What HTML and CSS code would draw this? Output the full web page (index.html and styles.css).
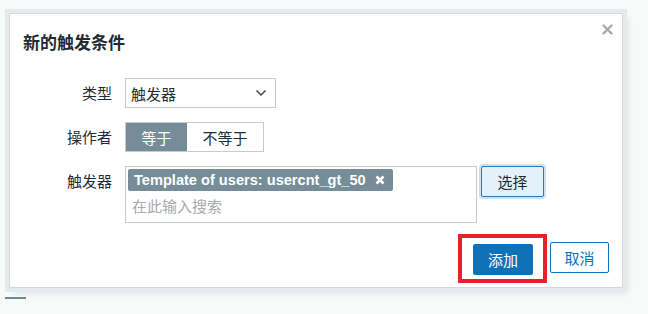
FILE: index.html
```html
<!DOCTYPE html>
<html lang="zh-CN">
<head>
<meta charset="UTF-8">
<title>新的触发条件</title>
<link rel="stylesheet" href="styles.css">
</head>
<body>
<div class="overlay">
<div class="dialog">
<div class="dialog-head">
<h4>新的触发条件</h4>
<button class="close" title="关闭">
<svg width="11" height="11" viewBox="0 0 11 11"><path d="M1.5 1.5 L9.5 9.5 M9.5 1.5 L1.5 9.5" stroke="#a3a9ae" stroke-width="2.4" stroke-linecap="round"/></svg>
</button>
</div>
<div class="form">
<label>类型</label>
<div class="field">
<div class="select">
<span>触发器</span>
<svg width="12" height="8" viewBox="0 0 12 8"><path d="M1.5 1.5 L6 6 L10.5 1.5" fill="none" stroke="#3a464d" stroke-width="1.5"/></svg>
</div>
</div>
<label>操作者</label>
<div class="field">
<div class="segment">
<span class="seg active">等于</span>
<span class="seg">不等于</span>
</div>
</div>
<label>触发器</label>
<div class="field multi-row">
<div class="multiselect">
<span class="tag">Template of users: usercnt_gt_50
<svg width="10" height="10" viewBox="0 0 10 10"><path d="M1.5 1.5 L8.5 8.5 M8.5 1.5 L1.5 8.5" stroke="#fff" stroke-width="2.6"/></svg>
</span>
<span class="placeholder">在此输入搜索</span>
</div>
<button class="btn-alt">选择</button>
</div>
</div>
<div class="dialog-foot">
<div class="mark">
<button class="btn-primary">添加</button>
</div>
<button class="btn-outline">取消</button>
</div>
</div>
</div>
<div class="page-tab"></div>
</body>
</html>
```

FILE: styles.css
```css
body {
margin: 0;
padding: 13px 0 0 9px;
background-color: #f8f9f9;
font-family: "Liberation Sans", "Noto Sans CJK SC", sans-serif;
font-size: 15px;
color: #1f2c33;
width: 648px;
height: 314px;
box-sizing: border-box;
overflow: hidden;
}
.dialog {
width: 614px;
height: 275px;
box-sizing: border-box;
background-color: #fff;
border: 1px solid #d3d8dc;
box-shadow: 0 0 0 4px #e7eaed, 5px 5px 6px rgba(0, 0, 0, 0.1);
display: flex;
flex-direction: column;
}
.dialog-head {
display: flex;
justify-content: space-between;
align-items: flex-start;
padding: 18px 9px 0 13px;
}
.dialog-head h4 {
margin: 0;
font-size: 17px;
line-height: 20px;
font-weight: bold;
font-family: "Noto Sans CJK SC", sans-serif;
color: #1f2c33;
}
.close {
border: none;
background: none;
padding: 0;
margin-top: -8px;
width: 11px;
height: 11px;
}
.close svg {
display: block;
}
.form {
display: grid;
grid-template-columns: 102px 1fr;
column-gap: 13px;
row-gap: 14px;
margin-top: 26px;
}
.form label {
text-align: right;
line-height: 30px;
font-family: "Noto Sans CJK SC", sans-serif;
}
.field {
display: flex;
gap: 4px;
align-items: flex-start;
}
.select {
width: 151px;
height: 30px;
box-sizing: border-box;
border: 1px solid #c5cbcf;
display: flex;
align-items: center;
justify-content: space-between;
padding: 0 8px 0 5px;
font-family: "Noto Sans CJK SC", sans-serif;
}
.segment {
display: flex;
height: 30px;
border: 1px solid #c5cbcf;
box-sizing: border-box;
font-family: "Noto Sans CJK SC", sans-serif;
}
.seg {
display: flex;
align-items: center;
justify-content: center;
width: 61px;
}
.seg + .seg {
width: 76px;
}
.seg.active {
background-color: #768d99;
color: #fff;
}
.multiselect {
width: 352px;
height: 57px;
box-sizing: border-box;
border: 1px solid #c5cbcf;
padding: 2px;
display: flex;
flex-direction: column;
align-items: flex-start;
}
.tag {
display: flex;
align-items: center;
gap: 9px;
background-color: #768d99;
color: #fff;
font-weight: bold;
font-size: 14.6px;
height: 22px;
padding: 0 8px 0 6px;
border-radius: 2px;
white-space: nowrap;
}
.placeholder {
color: #a4aaae;
padding-left: 4px;
margin-top: 4px;
line-height: 22px;
font-family: "Noto Sans CJK SC", sans-serif;
}
button {
font-family: "Noto Sans CJK SC", sans-serif;
font-size: 15px;
cursor: pointer;
}
.btn-alt {
width: 63px;
height: 31px;
background-color: #e6f0fa;
color: #1f2c33;
border: 1px solid #2a78b8;
border-radius: 2px;
box-shadow: 0 0 0 2px #cfe2f3;
padding: 0;
}
.dialog-foot {
margin-top: auto;
display: flex;
justify-content: flex-end;
align-items: center;
gap: 3px;
padding: 0 13px 4px 0;
}
.mark {
border: 4px solid #e4222b;
padding: 6px 10px 4px 11px;
}
.btn-primary {
width: 60px;
height: 31px;
background-color: #0f72b8;
color: #fff;
border: none;
border-radius: 2px;
padding: 0;
}
.btn-outline {
width: 59px;
height: 31px;
background-color: #fff;
color: #0f72b8;
border: 1px solid #0f72b8;
border-radius: 2px;
padding: 0;
margin-top: -2px;
}
.page-tab {
width: 21px;
height: 2px;
margin: 9px 0 0 -4px;
background-color: #6f8895;
}
```
